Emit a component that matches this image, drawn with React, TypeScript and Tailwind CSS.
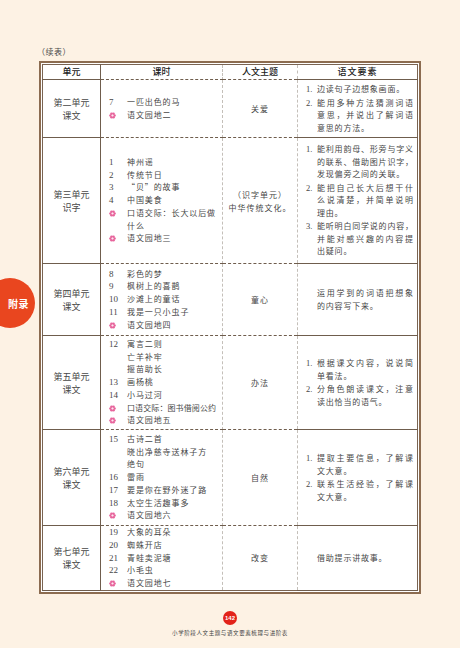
import React from "react";

type Lesson = { n?: string; flower?: boolean; lines: string[]; tight?: boolean };
type Element = { n?: string; lines: string[] };
type Unit = {
  name: string[];
  h: string;
  lessons: Lesson[];
  theme: string[];
  elements: Element[];
};

const units: Unit[] = [
  {
    name: ["第二单元", "课文"],
    h: "h-[58px]",
    lessons: [
      { n: "7", lines: ["一匹出色的马"] },
      { flower: true, lines: ["语文园地二"] },
    ],
    theme: ["关爱"],
    elements: [
      { n: "1.", lines: ["边读句子边想象画面。"] },
      { n: "2.", lines: ["能用多种方法猜测词语", "意思，并说出了解词语", "意思的方法。"] },
    ],
  },
  {
    name: ["第三单元", "识字"],
    h: "h-[126px]",
    lessons: [
      { n: "1", lines: ["神州谣"] },
      { n: "2", lines: ["传统节日"] },
      { n: "3", lines: ["“贝”的故事"] },
      { n: "4", lines: ["中国美食"] },
      { flower: true, lines: ["口语交际：长大以后做", "什么"] },
      { flower: true, lines: ["语文园地三"] },
    ],
    theme: ["（识字单元）", "中华传统文化。"],
    elements: [
      { n: "1.", lines: ["能利用韵母、形旁与字义", "的联系、借助图片识字，", "发现偏旁之间的关联。"] },
      { n: "2.", lines: ["能把自己长大后想干什", "么说清楚，并简单说明", "理由。"] },
      { n: "3.", lines: ["能听明白同学说的内容，", "并能对感兴趣的内容提", "出疑问。"] },
    ],
  },
  {
    name: ["第四单元", "课文"],
    h: "h-[72px]",
    lessons: [
      { n: "8", lines: ["彩色的梦"] },
      { n: "9", lines: ["枫树上的喜鹊"] },
      { n: "10", lines: ["沙滩上的童话"] },
      { n: "11", lines: ["我是一只小虫子"] },
      { flower: true, lines: ["语文园地四"] },
    ],
    theme: ["童心"],
    elements: [{ lines: ["运用学到的词语把想象", "的内容写下来。"] }],
  },
  {
    name: ["第五单元", "课文"],
    h: "h-[94px]",
    lessons: [
      { n: "12", lines: ["寓言二则"] },
      { lines: ["亡羊补牢"] },
      { lines: ["揠苗助长"] },
      { n: "13", lines: ["画杨桃"] },
      { n: "14", lines: ["小马过河"] },
      { flower: true, lines: ["口语交际：图书借阅公约"], tight: true },
      { flower: true, lines: ["语文园地五"] },
    ],
    theme: ["办法"],
    elements: [
      { n: "1.", lines: ["根据课文内容，说说简", "单看法。"] },
      { n: "2.", lines: ["分角色朗读课文，注意", "读出恰当的语气。"] },
    ],
  },
  {
    name: ["第六单元", "课文"],
    h: "h-[96px]",
    lessons: [
      { n: "15", lines: ["古诗二首"] },
      { lines: ["晓出净慈寺送林子方"] },
      { lines: ["绝句"] },
      { n: "16", lines: ["雷雨"] },
      { n: "17", lines: ["要是你在野外迷了路"] },
      { n: "18", lines: ["太空生活趣事多"] },
      { flower: true, lines: ["语文园地六"] },
    ],
    theme: ["自然"],
    elements: [
      { n: "1.", lines: ["提取主要信息，了解课", "文大意。"] },
      { n: "2.", lines: ["联系生活经验，了解课", "文大意。"] },
    ],
  },
  {
    name: ["第七单元", "课文"],
    h: "h-[62px]",
    lessons: [
      { n: "19", lines: ["大象的耳朵"] },
      { n: "20", lines: ["蜘蛛开店"] },
      { n: "21", lines: ["青蛙卖泥塘"] },
      { n: "22", lines: ["小毛虫"] },
      { flower: true, lines: ["语文园地七"] },
    ],
    theme: ["改变"],
    elements: [{ lines: ["借助提示讲故事。"] }],
  },
];

function Flower() {
  const petals = [0, 1, 2, 3, 4, 5];
  return (
    <svg viewBox="0 0 10 10" width="7" height="7" className="mt-[3px]">
      {petals.map((i) => (
        <circle
          key={i}
          cx={5 + 2.8 * Math.cos((i * Math.PI) / 3)}
          cy={5 + 2.8 * Math.sin((i * Math.PI) / 3)}
          r="1.9"
          fill="#e7639b"
        />
      ))}
      <circle cx="5" cy="5" r="1.6" fill="#fde7f0" />
    </svg>
  );
}

export default function App() {
  const cjk = { fontFamily: '"Noto Sans CJK SC", "Noto Sans", sans-serif' };
  return (
    <div
      className="relative w-[460px] h-[648px] overflow-hidden bg-[#fdf2e4] text-[#474747]"
      style={cjk}
    >
      {/* side tab */}
      <div className="absolute left-[-15px] top-[278px] w-[50px] h-[50px] rounded-full bg-[#e9461f] flex items-center justify-end pr-[6px]">
        <span className="text-[10px] font-bold text-white tracking-[0.5px]">附录</span>
      </div>

      <div className="pt-[46px] pl-[39px]">
        <div className="text-[8px] leading-[12px] h-[12px] -ml-[2px] tracking-[0.5px]">（续表）</div>
        <div className="mt-[3px] w-[382px] border-2 border-[#8c6c50] p-[1px] bg-white">
          <table className="w-full table-fixed border-collapse border border-[#7a6452]">
            <colgroup>
              <col className="w-[58px]" />
              <col className="w-[122px]" />
              <col className="w-[75px]" />
              <col />
            </colgroup>
            <thead>
              <tr className="text-[9px] text-[#222]">
                <th className="h-[15px] font-medium border-b border-r border-[#6f5d4d]">单元</th>
                <th className="font-medium border-b border-r border-dashed border-b-[#6f5d4d] border-r-[#c4bfb9]">课时</th>
                <th className="font-medium border-b border-r border-dashed border-b-[#6f5d4d] border-r-[#c4bfb9]">人文主题</th>
                <th className="font-medium border-b border-[#6f5d4d] tracking-[1px]">语文要素</th>
              </tr>
            </thead>
            <tbody>
              {units.map((u, ui) => (
                <tr key={ui}>
                  <td className={`${u.h} p-0 text-center align-middle text-[9px] leading-[13px] border-b border-r border-[#6f5d4d]`}>
                    {u.name.map((t) => (
                      <div key={t}>{t}</div>
                    ))}
                  </td>
                  <td className="p-0 pl-[8px] align-middle border-b border-r border-dashed border-b-[#6f5d4d] border-r-[#c4bfb9]">
                    <div className="flex flex-col text-[8px] leading-[12.8px] tracking-[0.9px] whitespace-nowrap">
                      {u.lessons.map((l, li) => (
                        <div key={li} className="flex">
                          <div className="w-[18px] shrink-0 flex">
                            {l.flower ? (
                              <Flower />
                            ) : (
                              <span className="text-[9px] tracking-normal" style={{ fontFamily: '"Liberation Serif", serif' }}>
                                {l.n}
                              </span>
                            )}
                          </div>
                          <div className={l.tight ? "flex flex-col tracking-[0.1px]" : "flex flex-col"}>
                            {l.lines.map((t) => (
                              <span key={t}>{t}</span>
                            ))}
                          </div>
                        </div>
                      ))}
                    </div>
                  </td>
                  <td className="p-0 text-center align-middle text-[8px] leading-[13px] tracking-[1px] border-b border-r border-dashed border-b-[#6f5d4d] border-r-[#c4bfb9]">
                    {u.theme.map((t) => (
                      <div key={t}>{t}</div>
                    ))}
                  </td>
                  <td className="p-0 pl-[8px] pr-[4px] align-middle border-b border-[#6f5d4d]">
                    <div className="flex flex-col gap-[1px] text-[8px] leading-[12.5px]">
                      {u.elements.map((e, ei) => (
                        <div key={ei} className="flex">
                          <span className="w-[11px] shrink-0 text-[8.5px]" style={{ fontFamily: '"Liberation Serif", serif' }}>
                            {e.n}
                          </span>
                          <div className="flex-1 min-w-0 flex flex-col">
                            {e.lines.map((t, ti) => (
                              <span
                                key={t}
                                className={
                                  ti < e.lines.length - 1
                                    ? "block text-justify [text-align-last:justify]"
                                    : "block tracking-[0.8px]"
                                }
                              >
                                {t}
                              </span>
                            ))}
                          </div>
                        </div>
                      ))}
                    </div>
                  </td>
                </tr>
              ))}
            </tbody>
          </table>
        </div>
      </div>

      <div className="mt-[17px] flex flex-col items-center">
        <div className="w-[14px] h-[14px] rounded-full bg-[#e2231a] flex items-center justify-center">
          <span className="text-[6px] font-bold text-white leading-none" style={{ fontFamily: '"Liberation Sans", sans-serif' }}>
            142
          </span>
        </div>
        <div className="mt-[5px] text-[5.5px] leading-[7px] tracking-[0.6px] text-[#444]">
          小学阶段人文主题与语文要素梳理与进阶表
        </div>
      </div>
    </div>
  );
}
